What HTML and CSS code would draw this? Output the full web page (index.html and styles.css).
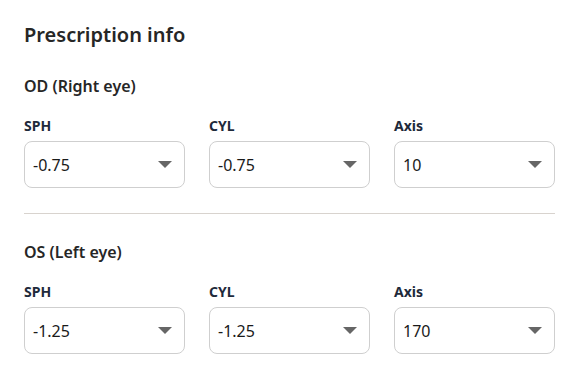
FILE: index.html
```html
<!DOCTYPE html>
<html lang="en">
<head>
<meta charset="utf-8">
<link rel="stylesheet" href="styles.css">
</head>
<body>
<main class="panel">
  <h1 class="title">Prescription info</h1>

  <section class="eye">
    <h2 class="eye-title">OD (Right eye)</h2>
    <div class="fields">
      <div class="field">
        <div class="label">SPH</div>
        <div class="select"><span class="value">-0.75</span><span class="caret"></span></div>
      </div>
      <div class="field">
        <div class="label">CYL</div>
        <div class="select"><span class="value">-0.75</span><span class="caret"></span></div>
      </div>
      <div class="field">
        <div class="label">Axis</div>
        <div class="select"><span class="value">10</span><span class="caret"></span></div>
      </div>
    </div>
  </section>

  <hr class="divider">

  <section class="eye">
    <h2 class="eye-title">OS (Left eye)</h2>
    <div class="fields">
      <div class="field">
        <div class="label">SPH</div>
        <div class="select"><span class="value">-1.25</span><span class="caret"></span></div>
      </div>
      <div class="field">
        <div class="label">CYL</div>
        <div class="select"><span class="value">-1.25</span><span class="caret"></span></div>
      </div>
      <div class="field">
        <div class="label">Axis</div>
        <div class="select"><span class="value">170</span><span class="caret"></span></div>
      </div>
    </div>
  </section>
</main>
</body>
</html>
```

FILE: styles.css
```css
* { box-sizing: border-box; }
html, body { margin: 0; padding: 0; background: #fff; }
body {
  font-family: "Noto Sans", "Open Sans", sans-serif;
  color: #222;
}
.panel {
  width: 575px;
  padding: 21px 20px 0 24px;
}
.title {
  margin: 0;
  font-size: 20px;
  font-weight: 600;
  line-height: 28px;
  color: #262626;
}
.eye-title {
  margin: 0;
  font-size: 16px;
  font-weight: 600;
  line-height: 24px;
  color: #262626;
}
.panel > .eye:first-of-type { margin-top: 25px; }
.fields {
  display: grid;
  grid-template-columns: repeat(3, 161px);
  column-gap: 24px;
  margin-top: 19px;
}
.label {
  font-size: 14px;
  font-weight: 700;
  line-height: 18px;
  color: #1e2a3b;
  margin-bottom: 6px;
}
.select {
  height: 47px;
  border: 1px solid #cfcfcf;
  border-radius: 8px;
  display: flex;
  align-items: center;
  justify-content: space-between;
  padding: 0 12px 0 8px;
}
.value {
  font-size: 16px;
  color: #1a1a1a;
}
.caret {
  width: 0;
  height: 0;
  border-left: 7px solid transparent;
  border-right: 7px solid transparent;
  border-top: 7px solid #666;
}
.divider {
  border: 0;
  border-top: 1px solid #d8d3ce;
  margin: 25px 0 26px;
  width: 531px;
}
```
